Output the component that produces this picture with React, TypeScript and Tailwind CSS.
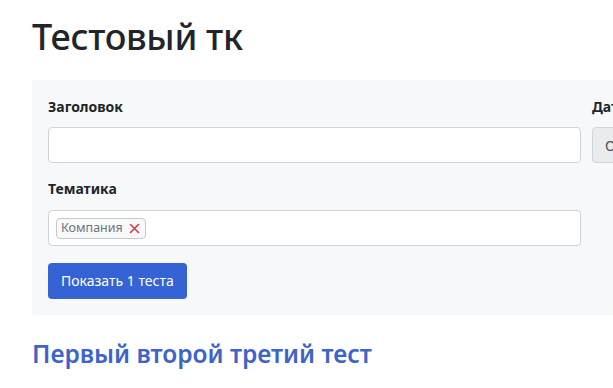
import React from "react";

const font = { fontFamily: '"Noto Sans", "Open Sans", sans-serif' };

export default function App() {
  return (
    <div className="w-[613px] h-[388px] overflow-hidden bg-white text-[#212529]" style={font}>
      <div className="w-[900px] pl-[32px] pt-[13px]">
        <h1 className="text-[36px] font-medium leading-[48px] tracking-[-0.3px] mb-[19px]">Тестовый тк</h1>

        <div className="bg-[#f7f8fa] rounded-[3px] px-[16px] pt-[17px] pb-[16px]">
          <div className="flex gap-[11px]">
            <div className="w-[533px]">
              <label className="block text-[14px] font-bold leading-[20px] mb-[10px]">Заголовок</label>
              <input className="block w-full h-[36px] bg-white border border-[#ced4da] rounded-[4px] px-3 outline-none" />
            </div>
            <div className="w-[200px]">
              <label className="block text-[14px] font-bold leading-[20px] mb-[10px]">Дата</label>
              <div className="h-[36px] bg-[#e9ecef] border border-[#ced4da] rounded-[4px] px-[12px] flex items-center text-[14px] text-[#495057]">
                Отбор
              </div>
            </div>
          </div>

          <label className="block text-[14px] font-bold leading-[20px] mt-[16px] mb-[11px]">Тематика</label>
          <div className="w-[533px] h-[36px] bg-white border border-[#ced4da] rounded-[4px] flex items-center px-[7px]">
            <span className="inline-flex items-center h-[21px] border border-[#c8c8c8] rounded-[4px] bg-[#f8f9fa] pl-[4px] pr-[5px] text-[12.5px] text-[#6c757d]">
              Компания
              <svg className="ml-[6px]" width="11" height="11" viewBox="0 0 11 11" fill="none" stroke="#dc3545" strokeWidth="1.6" strokeLinecap="round">
                <path d="M1.5 1.5 L9.5 9.5 M9.5 1.5 L1.5 9.5" />
              </svg>
            </span>
          </div>

          <button className="block mt-[17px] h-[36px] px-[13px] rounded-[4px] bg-[#3563d6] text-white text-[14px] leading-none">
            Показать 1 теста
          </button>
        </div>

        <h2 className="mt-[23px] text-[24.5px] font-semibold text-[#3d64cc] leading-[32px]">Первый второй третий тест</h2>
      </div>
    </div>
  );
}
